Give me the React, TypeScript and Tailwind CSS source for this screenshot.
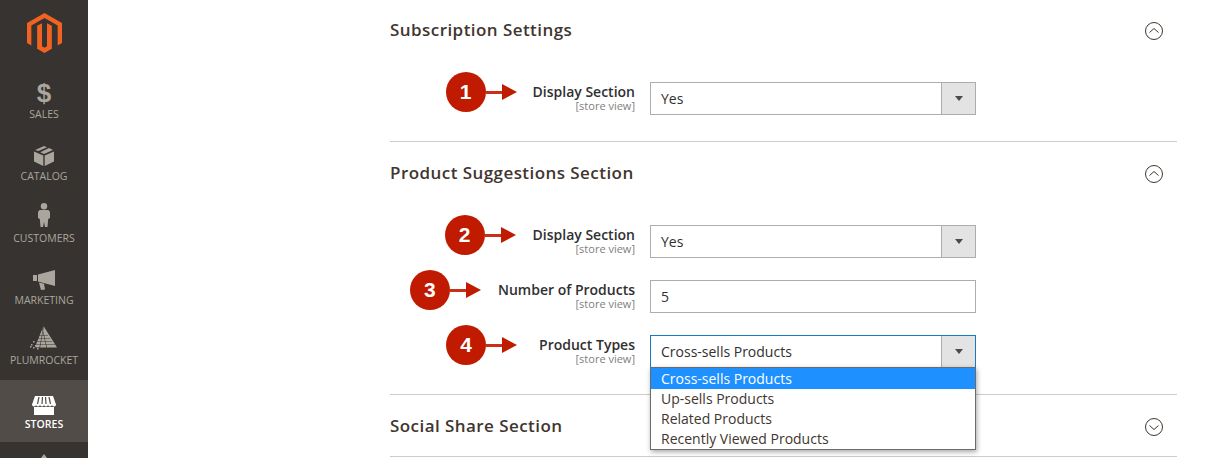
import React from 'react';

const Logo = () => (
  <svg width="35" height="40" viewBox="0 0 21 24" className="block">
    <path fill="#f26322" d="M10.5 0L21 6v12l-2.6 1.5V7.5L10.5 3 2.6 7.5v12L0 18V6z" />
    <path fill="#f26322" d="M10.5 24l-4.400-2.500V7.700l2.900-1.600v13.900l1.500.9 1.500-.9V6.100l2.900 1.600v13.800z" />
  </svg>
);

const BoxIcon = () => (
  <svg width="20" height="20" viewBox="0 0 20 20" className="block">
    <path fill="#aaa69e" d="M0 5.500l9.300 4V20L0 15.600zM20 5.500l-9.300 4V20l9.300-4.400z" />
    <path fill="#aaa69e" d="M10 0l3 1.300-8.600 3.700L1.200 4zM15 2.100L19 4l-9 4-3.700-1.800z" />
  </svg>
);

const PersonIcon = () => (
  <svg width="12" height="24" viewBox="0 0 12 24" className="block">
    <circle cx="6" cy="3.200" r="3.200" fill="#aaa69e" />
    <path fill="#aaa69e" d="M1.500 7h9l1.500 2v6l-1.800 1-.7 8H7l-1-5-1 5H2.500l-.7-8L0 15V9z" />
  </svg>
);

const MegaphoneIcon = () => (
  <svg width="23" height="20" viewBox="0 0 23 20" className="block">
    <path fill="#aaa69e" d="M0 5h4v6H0zM5 4.500L22 0v16L5 11.500z" />
    <path fill="#aaa69e" d="M6 12.500l5 1.300 1 5.700-4 .5z" />
  </svg>
);

const PyramidIcon = () => (
  <svg width="28" height="24" viewBox="0 0 28 24" className="block">
    <path fill="#aaa69e" d="M13.500 0L27 21.500H8L5 21z" />
    <g fill="#373330">
      <path d="M9 9h9v.6H9zM7 12h13v.6H7zM6 15h16v.6H6zM5 18h20v.6H5zM12 0l5 22h-.6L11.500 0zM14 0l-4 22h-.6L13.500 0z" />
    </g>
    <g fill="#aaa69e">
      <rect x="3" y="15" width="1.500" height="1.500" />
      <rect x="1" y="18" width="1.500" height="1.500" />
      <rect x="5" y="19" width="1.500" height="1.500" />
      <rect x="0" y="20" width="1.500" height="1.500" />
      <rect x="3" y="21" width="1.500" height="1.500" />
      <rect x="7" y="22" width="1.500" height="1.500" />
    </g>
  </svg>
);

const StoreIcon = () => (
  <svg width="24" height="19" viewBox="0 0 24 19" className="block">
    <path fill="#ffffff" d="M3 0h18l3 8.500a2 2 0 0 1-4 0 2 2 0 0 1-4 0 2 2 0 0 1-4 0 2 2 0 0 1-4 0 2 2 0 0 1-4 0 2 2 0 0 1-4 0z" />
    <path stroke="#514c47" strokeWidth="1.200" d="M7 1L5.500 8M10.500 1L10 8M13.500 1l.5 7M17 1l1.500 7" />
    <path fill="#ffffff" d="M2 11h20v8H2z" />
  </svg>
);

const items = [
  { label: 'SALES', icon: <span className="block text-[26px] leading-[24px] font-bold text-[#aaa69e] font-['Liberation_Sans',sans-serif]">$</span>, box: 'h-[37px] pt-[11px]' },
  { label: 'CATALOG', icon: <BoxIcon />, box: 'h-[37px] pt-[14px]' },
  { label: 'CUSTOMERS', icon: <PersonIcon />, box: 'h-[37px] pt-[9px]' },
  { label: 'MARKETING', icon: <MegaphoneIcon />, box: 'h-[37px] pt-[14px]' },
  { label: 'PLUMROCKET', icon: <PyramidIcon />, box: 'h-[35px] pt-[8px]' },
];

const Sidebar = () => (
  <aside className="w-[88px] shrink-0 h-full bg-[#373330] overflow-hidden flex flex-col items-stretch">
    <div className="h-[71px] shrink-0 flex justify-center pt-[13px]">
      <Logo />
    </div>
    <div className="h-px mx-[14px] bg-[#736e69] -mb-px relative" />
    {items.map((item) => (
      <div key={item.label} className="h-[62px] shrink-0 flex flex-col items-center">
        <div className={item.box}>{item.icon}</div>
        <span className="text-[10.5px] leading-[14px] text-[#aaa69e]">{item.label}</span>
      </div>
    ))}
    <div className="h-[62px] shrink-0 bg-[#514c47] flex flex-col items-center">
      <div className="h-[37px] pt-[16px]">
        <StoreIcon />
      </div>
      <span className="text-[10.5px] leading-[14px] text-white font-semibold">STORES</span>
    </div>
    <div className="flex justify-center pt-[12px]">
      <div className="w-0 h-0 border-x-[3px] border-x-transparent border-b-[4px] border-b-[#aaa69e]" />
    </div>
  </aside>
);

const Chevron = ({ open }: { open: boolean }) => (
  <svg width="20" height="20" viewBox="0 0 20 20" className="block">
    <circle cx="10" cy="10" r="8.500" fill="none" stroke="#41362f" strokeWidth="1" />
    <path d={open ? 'M5.500 11.500L10 7.500l4.500 4' : 'M5.500 8.500L10 12.500l4.500-4'} fill="none" stroke="#41362f" strokeWidth="1" />
  </svg>
);

const SectionHead = ({ title, open, h }: { title: string; open: boolean; h: string }) => (
  <div className={`flex items-center justify-between ${h}`}>
    <h2 className="text-[17px] leading-[24px] mb-[2px] font-semibold tracking-[0.44px] text-[#41362f]">{title}</h2>
    <div className="mr-[13px]">
      <Chevron open={open} />
    </div>
  </div>
);

const Marker = ({ n }: { n: number }) => (
  <div className="flex items-center mb-[13px]">
    <div className="w-[40px] h-[40px] rounded-full bg-[#c01a00] flex items-center justify-center text-white text-[21px] font-bold font-['Liberation_Sans',sans-serif]">
      {n}
    </div>
    <div className="w-[16px] h-[3px] bg-[#c9301c]" />
    <div className="w-0 h-0 border-y-[8px] border-y-transparent border-l-[15px] border-l-[#c01a00]" />
  </div>
);

const FieldLabel = ({ n, label, gap }: { n: number; label: string; gap: string }) => (
  <div className={`w-[245px] flex items-center justify-end ${gap}`}>
    <Marker n={n} />
    <div className="text-right mb-[2px]">
      <div className="text-[14px] leading-[16px] font-semibold text-[#303030] whitespace-nowrap">{label}</div>
      <div className="text-[11px] leading-[12px] text-[#808080] whitespace-nowrap">[store view]</div>
    </div>
  </div>
);

const SelectBox = ({ value, focused }: { value: string; focused?: boolean }) => (
  <div className={`w-[326px] h-[33px] border flex bg-white ${focused ? 'border-[#1979c3]' : 'border-[#adadad]'}`}>
    <div className="flex-1 pl-[10px] text-[14px] leading-[31px] text-[#303030]">{value}</div>
    <div className="w-[34px] bg-[#e3e3e3] border-l border-l-[#adadad] flex items-center justify-center">
      <div className="w-0 h-0 border-x-[4px] border-x-transparent border-t-[5px] border-t-[#514943]" />
    </div>
  </div>
);

const dropdownOptions = ['Cross-sells Products', 'Up-sells Products', 'Related Products', 'Recently Viewed Products'];

const Dropdown = () => (
  <div className="absolute left-0 top-[32px] w-[326px] bg-white border border-[#6b6b6b] shadow-[1px_2px_5px_rgba(0,0,0,0.35)] z-10">
    {dropdownOptions.map((o, i) => (
      <div key={o} className={`pl-[10px] text-[14px] ${i === 0 ? 'h-[21px] leading-[22px] bg-[#1e90ff] text-white' : 'h-[20px] leading-[20px] text-[#41362f]'}`}>
        {o}
      </div>
    ))}
  </div>
);

export default function App() {
  return (
    <div className="w-[1206px] h-[458px] overflow-hidden flex bg-white font-['Open_Sans',sans-serif]">
      <Sidebar />
      <main className="w-[787px] ml-[302px] shrink-0">
        <div className="border-b border-[#cccccc] h-[142px]">
          <SectionHead title="Subscription Settings" open h="h-[62px]" />
          <div className="flex items-center gap-[15px] h-[33px] mt-[20px]">
            <FieldLabel n={1} label="Display Section" gap="gap-[16px]" />
            <SelectBox value="Yes" />
          </div>
        </div>
        <div className="border-b border-[#cccccc] h-[253px]">
          <SectionHead title="Product Suggestions Section" open h="h-[63px]" />
          <div className="flex items-center gap-[15px] h-[33px] mt-[20px]">
            <FieldLabel n={2} label="Display Section" gap="gap-[17px]" />
            <SelectBox value="Yes" />
          </div>
          <div className="flex items-center gap-[15px] h-[33px] mt-[22px]">
            <FieldLabel n={3} label="Number of Products" gap="gap-[17px]" />
            <div className="w-[326px] h-[33px] border border-[#adadad] pl-[10px] text-[14px] leading-[31px] text-[#303030]">5</div>
          </div>
          <div className="flex items-center gap-[15px] h-[33px] mt-[22px]">
            <FieldLabel n={4} label="Product Types" gap="gap-[22px]" />
            <div className="relative">
              <SelectBox value="Cross-sells Products" focused />
              <Dropdown />
            </div>
          </div>
        </div>
        <div className="border-b border-[#cccccc] h-[62px]">
          <SectionHead title="Social Share Section" open={false} h="h-[64px]" />
        </div>
      </main>
    </div>
  );
}
